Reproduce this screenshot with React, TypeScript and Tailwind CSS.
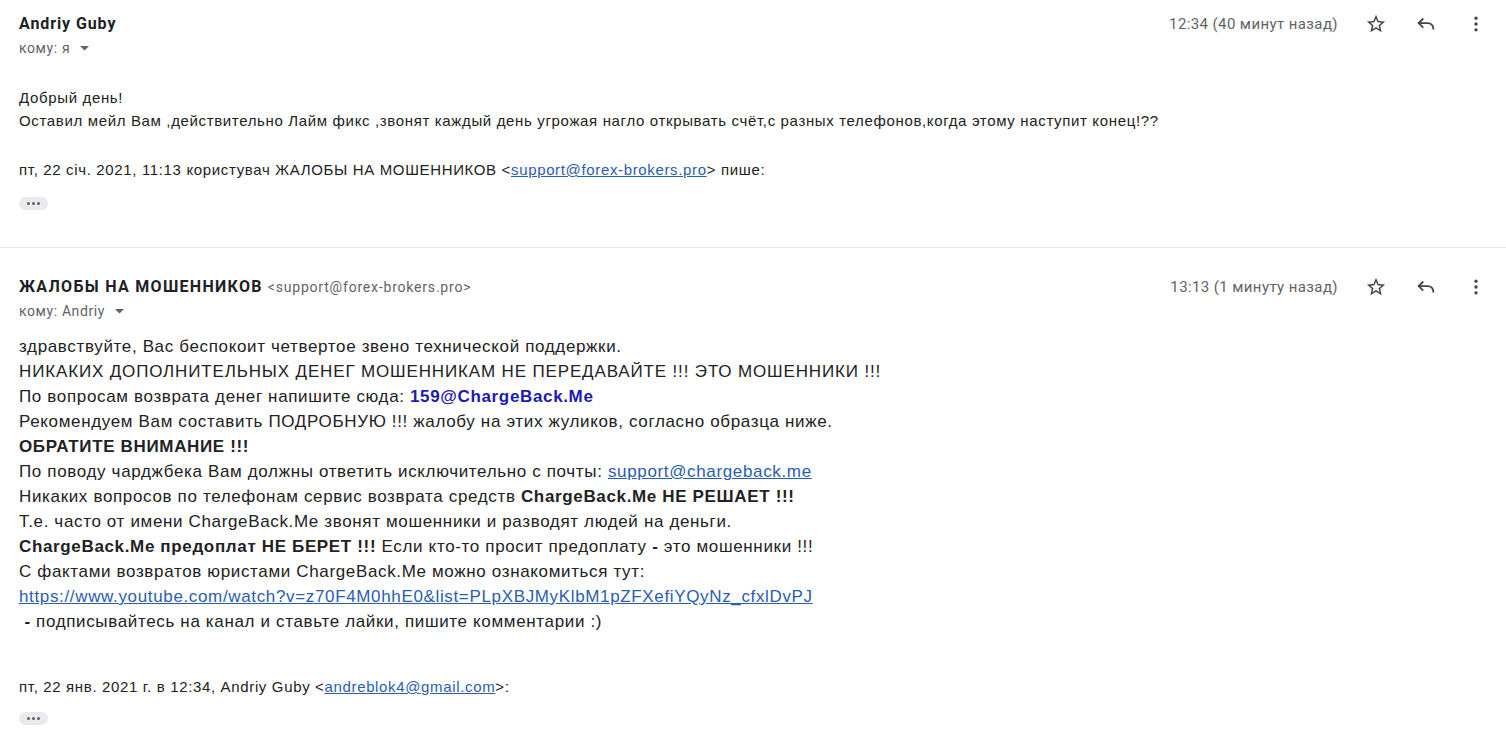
import React from "react";

const Star = () => (
  <svg width="22" height="22" viewBox="0 0 24 24" fill="#444">
    <path d="M22 9.24l-7.19-.62L12 2 9.19 8.63 2 9.24l5.46 4.73L5.82 21 12 17.27 18.18 21l-1.63-7.03L22 9.24zM12 15.4l-3.76 2.27 1-4.28-3.32-2.88 4.38-.38L12 6.1l1.71 4.04 4.38.38-3.32 2.88 1 4.28L12 15.4z" />
  </svg>
);
const ReplyOutline = () => (
  <svg width="22" height="22" viewBox="0 0 24 24" fill="none" stroke="#444" strokeWidth="2">
    <path d="M9 6L4 11l5 5" />
    <path d="M4 11h10a6 6 0 0 1 6 6v1" />
  </svg>
);
const More = () => (
  <svg width="20" height="20" viewBox="0 0 24 24" fill="#444">
    <circle cx="12" cy="5" r="2" />
    <circle cx="12" cy="12" r="2" />
    <circle cx="12" cy="19" r="2" />
  </svg>
);
const Caret = () => (
  <svg width="11" height="10" viewBox="0 0 11 10" fill="#5f6368">
    <path d="M1 3h9L5.5 7.5z" />
  </svg>
);

const Dots = () => (
  <div className="w-[29px] h-[13px] rounded-[7px] bg-[#e8eaed] flex items-center justify-center gap-[2px]">
    <span className="w-[3px] h-[3px] rounded-full bg-[#5f6368]" />
    <span className="w-[3px] h-[3px] rounded-full bg-[#5f6368]" />
    <span className="w-[3px] h-[3px] rounded-full bg-[#5f6368]" />
  </div>
);

function Actions({ time }: { time: string }) {
  return (
    <div className="flex items-center">
      <span className="text-[15px] tracking-[0.4px] text-[#5f6368] mr-[13px]" style={{ fontFamily: "Roboto, sans-serif" }}>{time}</span>
      <div className="w-[50px] flex justify-center"><Star /></div>
      <div className="w-[50px] flex justify-center"><ReplyOutline /></div>
      <div className="w-[50px] flex justify-center"><More /></div>
    </div>
  );
}

export default function App() {
  const roboto = { fontFamily: "Roboto, 'Noto Sans', sans-serif" };
  const arial = { fontFamily: "'Liberation Sans', Arial, sans-serif" };
  const link = "text-[#2a5db0] underline";
  return (
    <div className="w-[1506px] h-[744px] bg-white overflow-hidden text-[#222]">
      {/* message 1 */}
      <div className="pl-[19px] pr-[5px] pt-[13px]">
        <div className="flex justify-between items-start">
          <div style={roboto}>
            <div className="text-[16px] tracking-[0.9px] font-bold text-[#202124] leading-[22px]">Andriy Guby</div>
            <div className="flex items-center gap-[9px] text-[14px] tracking-[0.6px] text-[#5f6368] leading-[20px] mt-[3px]">
              <span>кому: я</span>
              <Caret />
            </div>
          </div>
          <Actions time="12:34 (40 минут назад)" />
        </div>
        <div className="mt-[28px] text-[15px] tracking-[0.65px] leading-[23px] text-[#222]" style={arial}>
          <div>Добрый день!</div>
          <div>Оставил мейл Вам ,действительно Лайм фикс ,звонят каждый день угрожая нагло открывать счёт,с разных телефонов,когда этому наступит конец!??</div>
          <div className="mt-[26px] text-[#222]">
            пт, 22 січ. 2021, 11:13 користувач ЖАЛОБЫ НА МОШЕННИКОВ &lt;<span className={link}>support@forex-brokers.pro</span>&gt; пише:
          </div>
          <div className="mt-[16px]"><Dots /></div>
        </div>
      </div>

      <div className="mt-[37px] h-px bg-[#e8e8e8]" />

      {/* message 2 */}
      <div className="pl-[19px] pr-[5px] pt-[28px]">
        <div className="flex justify-between items-start">
          <div style={roboto}>
            <div className="flex items-baseline gap-[5px] leading-[22px]">
              <span className="text-[16px] tracking-[1.3px] font-bold text-[#202124]">ЖАЛОБЫ НА МОШЕННИКОВ</span>
              <span className="text-[14px] tracking-[0.8px] text-[#5f6368]">&lt;support@forex-brokers.pro&gt;</span>
            </div>
            <div className="flex items-center gap-[9px] text-[14px] tracking-[0.6px] text-[#5f6368] leading-[20px] mt-[3px]">
              <span>кому: Andriy</span>
              <Caret />
            </div>
          </div>
          <Actions time="13:13 (1 минуту назад)" />
        </div>
        <div className="mt-[13px] text-[17px] tracking-[0.65px] leading-[25px] text-[#222]" style={arial}>
          <div>здравствуйте, Вас беспокоит четвертое звено технической поддержки.</div>
          <div className="tracking-[0.85px]">НИКАКИХ ДОПОЛНИТЕЛЬНЫХ ДЕНЕГ МОШЕННИКАМ НЕ ПЕРЕДАВАЙТЕ !!! ЭТО МОШЕННИКИ !!!</div>
          <div>По вопросам возврата денег напишите сюда: <b className="text-[#1b1bb3]">159@ChargeBack.Me</b></div>
          <div>Рекомендуем Вам составить ПОДРОБНУЮ !!! жалобу на этих жуликов, согласно образца ниже.</div>
          <div><b>ОБРАТИТЕ ВНИМАНИЕ !!!</b></div>
          <div>По поводу чарджбека Вам должны ответить исключительно с почты: <span className={link}>support@chargeback.me</span></div>
          <div>Никаких вопросов по телефонам сервис возврата средств <b>ChargeBack.Me НЕ РЕШАЕТ !!!</b></div>
          <div>Т.е. часто от имени ChargeBack.Me звонят мошенники и разводят людей на деньги.</div>
          <div><b>ChargeBack.Me предоплат НЕ БЕРЕТ !!!</b> Если кто-то просит предоплату <b>-</b> это мошенники !!!</div>
          <div>С фактами возвратов юристами ChargeBack.Me можно ознакомиться тут:</div>
          <div><span className={link}>https://www.youtube.com/watch?v=z70F4M0hhE0&amp;list=PLpXBJMyKlbM1pZFXefiYQyNz_cfxlDvPJ</span></div>
          <div>&nbsp;<b>-</b> подписывайтесь на канал и ставьте лайки, пишите комментарии :)</div>
        </div>
        <div className="mt-[41px] text-[15px] tracking-[0.65px] leading-[23px]" style={arial}>
          пт, 22 янв. 2021 г. в 12:34, Andriy Guby &lt;<span className={link}>andreblok4@gmail.com</span>&gt;:
        </div>
        <div className="mt-[14px]"><Dots /></div>
      </div>
    </div>
  );
}
